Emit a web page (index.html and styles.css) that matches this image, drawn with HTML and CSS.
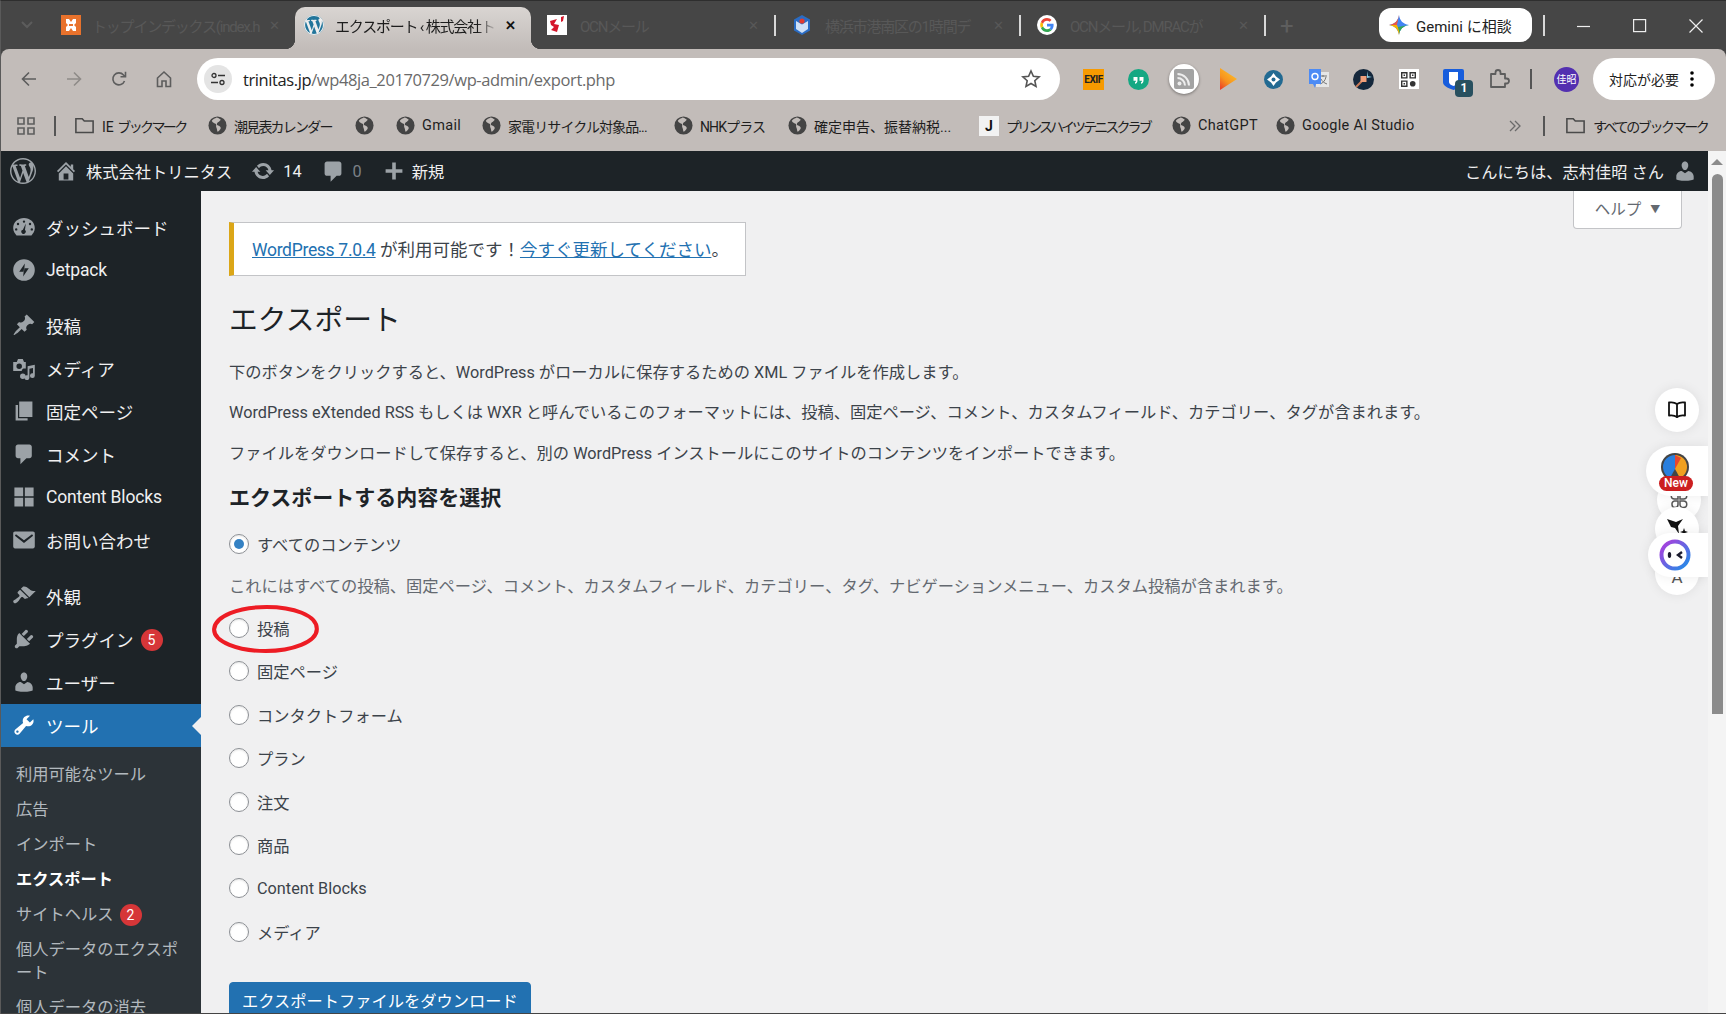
FILE: index.html
```html
<!DOCTYPE html>
<html lang="ja">
<head>
  <meta charset="UTF-8">
  <title>エクスポート ‹ 株式会社トリニタス</title>
  <link rel="stylesheet" href="styles.css">
</head>
<body>
<div class="window">

  <!-- タブ -->
  <div class="tabstrip">
    <svg class="tab-list" width="14" height="14" viewBox="0 0 14 14"><path d="M2 4l5 5 5-5" fill="none" stroke="#5c5c5c" stroke-width="2"/></svg>
    <div class="tab">
      <svg class="fav" viewBox="0 0 20 20"><rect width="20" height="20" fill="#e8722c"/><path d="M5 4h3l2 3 2-3h3v4l-2 2 2 2v4h-3l-2-3-2 3H5v-4l2-2-2-2z" fill="#fff"/><rect x="8" y="9" width="4" height="2" fill="#e8722c"/></svg>
      <span class="tab-title">トップインデックス(index.h</span>
      <span class="tab-x">✕</span>
    </div>
    <div class="tab active">
      <svg class="fav" viewBox="0 0 20 20"><circle cx="10" cy="10" r="10" fill="#21759b"/><path fill="#eee" d="M20 10c0-5.51-4.49-10-10-10C4.48 0 0 4.49 0 10c0 5.52 4.48 10 10 10 5.51 0 10-4.48 10-10zM7.78 15.37L4.37 6.22c.55-.02 1.17-.08 1.17-.08.5-.06.44-1.13-.06-1.11 0 0-1.45.11-2.37.11-.18 0-.37 0-.58-.01C4.12 2.69 6.87 1.11 10 1.11c2.33 0 4.45.87 6.05 2.34-.68-.11-1.65.39-1.65 1.58 0 .74.45 1.36.9 2.1.35.61.55 1.36.55 2.46 0 1.49-1.4 5-1.4 5l-3.03-8.37c.54-.02.82-.17.82-.17.5-.05.44-1.25-.06-1.22 0 0-1.44.12-2.38.12-.87 0-2.33-.12-2.33-.12-.5-.03-.56 1.2-.06 1.22l.92.08 1.26 3.41zM17.41 10c.24-.64.74-1.87.43-4.25.7 1.29 1.05 2.71 1.05 4.25 0 3.29-1.73 6.24-4.4 7.78.97-2.59 1.94-5.2 2.92-7.78zM6.1 18.09C3.12 16.65 1.11 13.53 1.11 10c0-1.3.23-2.48.72-3.59C3.25 10.3 4.67 14.2 6.1 18.09zm4.03-6.63l2.58 6.98c-.86.29-1.76.45-2.71.45-.79 0-1.57-.11-2.29-.33.81-2.38 1.62-4.74 2.42-7.1z"/></svg>
      <span class="tab-title">エクスポート ‹ 株式会社トリ</span>
      <span class="tab-x">✕</span>
    </div>
    <div class="tab">
      <svg class="fav" viewBox="0 0 20 20"><rect width="20" height="20" fill="#fff"/><path d="M3 6l7-2-3 5 5 1-2 7-6-2 3-3-3-2zM14 2l3-1-1 5-2 1z" fill="#d5162b"/></svg>
      <span class="tab-title">OCNメール</span>
      <span class="tab-x">✕</span>
    </div>
    <i class="tab-sep"></i>
    <div class="tab">
      <svg class="fav" viewBox="0 0 20 20"><path d="M10 0l8 4.5v11L10 20l-8-4.5v-11z" fill="#2a6cc4"/><path d="M4 6l6 3.5L16 6v8l-6 4-6-4z" fill="#cfe0f6"/><circle cx="10" cy="6" r="2.6" fill="#e23b2e"/></svg>
      <span class="tab-title">横浜市港南区の1時間デ</span>
      <span class="tab-x">✕</span>
    </div>
    <i class="tab-sep"></i>
    <div class="tab">
      <svg class="fav" viewBox="0 0 20 20"><circle cx="10" cy="10" r="10" fill="#fff"/><path d="M16.6 10.2c0-.5 0-1-.1-1.4H10v2.7h3.7c-.2.9-.6 1.6-1.3 2l2.1 1.7c1.3-1.1 2.1-2.9 2.1-5z" fill="#4285f4"/><path d="M10 17c1.9 0 3.4-.6 4.5-1.8l-2.1-1.7c-.6.4-1.4.7-2.4.7-1.8 0-3.4-1.2-3.9-2.9L3.9 13c1.1 2.4 3.4 4 6.1 4z" fill="#34a853"/><path d="M6.1 11.3c-.3-.8-.3-1.8 0-2.6L3.9 7c-.9 1.8-.9 4.200 0 6z" fill="#fbbc05"/><path d="M10 5.800c1 0 1.900.4 2.600 1l1.900-1.900C13.300 3.700 11.800 3 10 3 7.300 3 5 4.600 3.900 7l2.200 1.700C6.600 7 8.200 5.800 10 5.800z" fill="#ea4335"/></svg>
      <span class="tab-title">OCNメール, DMRACが</span>
      <span class="tab-x">✕</span>
    </div>
    <i class="tab-sep"></i>
    <span class="tab-new">+</span>
    <div class="gemini">
      <svg width="20" height="20" viewBox="0 0 20 20"><defs><clipPath id="gem"><path d="M10 0c.9 5.600 3.700 9 10 10-6.300 1-9.100 4.400-10 10-.9-5.600-3.700-9-10-10 6.300-1 9.100-4.400 10-10z"/></clipPath></defs><g clip-path="url(#gem)"><rect width="20" height="20" fill="#4285f4"/><path d="M0 0h10L8 10H0z" fill="#e8574a"/><path d="M0 10h8l4 10H0z" fill="#f4b400"/><path d="M9 12l11-2v10H11z" fill="#34a853"/></g></svg>
      <span>Gemini に相談</span>
    </div>
    <i class="tab-sep gem-sep"></i>
    <div class="win-btns">
      <svg width="14" height="14" viewBox="0 0 14 14"><path d="M0 7.500h13" stroke="#eee" stroke-width="1.200"/></svg>
      <svg width="14" height="14" viewBox="0 0 14 14"><rect x=".6" y=".6" width="12" height="12" fill="none" stroke="#eee" stroke-width="1.200"/></svg>
      <svg width="14" height="14" viewBox="0 0 14 14"><path d="M.5.500l13 13M13.500.500l-13 13" stroke="#eee" stroke-width="1.200"/></svg>
    </div>
  </div>

  <!-- ツールバー -->
  <div class="chrome">
    <div class="toolbar">
      <div class="nav-btns">
        <svg width="20" height="20" viewBox="0 0 20 20"><path d="M17 10H4M10 3.500L3.500 10l6.500 6.500" fill="none" stroke="#5d5d5d" stroke-width="1.600"/></svg>
        <svg width="20" height="20" viewBox="0 0 20 20"><path d="M3 10h13M10 3.500l6.500 6.500-6.500 6.500" fill="none" stroke="#8f8b88" stroke-width="1.600"/></svg>
        <svg width="20" height="20" viewBox="0 0 20 20"><path d="M15.500 12a6 6 0 1 1-1-6L16 7.500M16.500 2.800v5h-5" fill="none" stroke="#5d5d5d" stroke-width="1.600"/></svg>
        <svg width="20" height="20" viewBox="0 0 20 20"><path d="M3.500 9L10 3l6.500 6v8.500H12V12H8v5.500H3.500z" fill="none" stroke="#5d5d5d" stroke-width="1.600"/></svg>
      </div>
      <div class="urlbar">
        <span class="site-info"><svg width="16" height="16" viewBox="0 0 16 16"><circle cx="4" cy="4.500" r="2" fill="none" stroke="#333" stroke-width="1.300"/><path d="M8 4.500h7M1 11.500h7" stroke="#333" stroke-width="1.300"/><circle cx="12" cy="11.500" r="2" fill="none" stroke="#333" stroke-width="1.300"/></svg></span>
        <span class="url"><b>trinitas.jp</b>/wp48ja_20170729/wp-admin/export.php</span>
        <svg class="star" width="20" height="20" viewBox="0 0 20 20"><path d="M10 2l2.400 5.300 5.700.6-4.300 3.800 1.200 5.700L10 14.500l-5 2.900 1.200-5.700-4.300-3.800 5.700-.6z" fill="none" stroke="#555" stroke-width="1.600"/></svg>
      </div>
      <div class="exts">
        <span class="ext"><span class="ext-exif">EXIF</span></span>
        <span class="ext"><svg width="21" height="21" viewBox="0 0 21 21"><circle cx="10.500" cy="10.500" r="10.500" fill="#15a883"/><path d="M5.500 8h4v3.500c0 2-1 3-2.500 3.300v-1.500c.6-.2 1-.7 1-1.500H5.500zM11.500 8h4v3.500c0 2-1 3-2.500 3.300v-1.500c.6-.2 1-.7 1-1.500h-2.500z" fill="#fff"/></svg></span>
        <span class="ext"><span class="ext-rss"><svg width="20" height="20" viewBox="0 0 20 20"><rect width="20" height="20" rx="2" fill="#a3a3a3"/><circle cx="5.500" cy="14.500" r="2" fill="#eee"/><path d="M3.500 9a7.500 7.500 0 0 1 7.500 7.500M3.500 5a11.500 11.500 0 0 1 11.500 11.500" fill="none" stroke="#eee" stroke-width="2"/></svg></span></span>
        <span class="ext"><svg width="19" height="24" viewBox="0 0 19 24"><defs><linearGradient id="play" x1=".7" y1="0" x2="0" y2="1"><stop offset="0" stop-color="#fcc12b"/><stop offset=".55" stop-color="#f7931e"/><stop offset="1" stop-color="#e8352a"/></linearGradient></defs><path d="M1 1l17 11L1 23z" fill="url(#play)"/></svg></span>
        <span class="ext"><svg width="19" height="19" viewBox="0 0 19 19"><circle cx="9.500" cy="9.500" r="9.500" fill="#226a92"/><path d="M9.500 3l2.500 3.500 4 3-4 3-2.500 3.500-2.500-3.500-4-3 4-3z" fill="#fff"/><circle cx="9.500" cy="9.500" r="2" fill="#226a92"/></svg></span>
        <span class="ext"><svg width="22" height="22" viewBox="0 0 22 22"><rect x="8" y="4" width="13" height="15" fill="#e6e6e6"/><path d="M11 8h8M15 7v2M12 16c3-1 5-3 6-7M13 11c1 2 3 4 6 5" stroke="#777" stroke-width="1" fill="none"/><path d="M1 1h12v15H8l-1 4-2-4H1z" fill="#4c8bf5"/><circle cx="7" cy="8.500" r="3" fill="none" stroke="#fff" stroke-width="1.400"/></svg></span>
        <span class="ext"><svg width="21" height="21" viewBox="0 0 21 21"><circle cx="10.500" cy="10.500" r="10.500" fill="#15283c"/><path d="M3 18L10 11" stroke="#c97b58" stroke-width="2"/><rect x="7.500" y="7" width="6" height="6" fill="#f2a07a"/><path d="M14 2l1 5 4 1-5 1z" fill="#8fd0e6"/></svg></span>
        <span class="ext"><span class="ext-qr"><svg width="15" height="15" viewBox="0 0 16 16"><path d="M0 0h7v7H0zM1.500 1.500v4h4v-4zM9 0h7v7H9zM10.500 1.500v4h4v-4zM0 9h7v7H0zM1.500 10.500v4h4v-4zM2.700 2.700h1.600v1.600H2.700zM11.700 2.700h1.600v1.600h-1.600zM2.700 11.700h1.600v1.600H2.700z" fill="#333" fill-rule="evenodd"/><circle cx="12.500" cy="12.500" r="3" fill="#333"/></svg></span></span>
        <span class="ext ext-bit"><svg width="21" height="21" viewBox="0 0 21 21"><path d="M2 0h17a2 2 0 0 1 2 2v11c0 4-5 6-10.500 8C5 19 0 17 0 13V2a2 2 0 0 1 2-2z" fill="#175ddc"/><path d="M6 3h9v10c0 2-2 3-4.500 4C8 16 6 15 6 13z" fill="#fff"/></svg><span class="ext-badge">1</span></span>
        <span class="ext"><svg width="22" height="22" viewBox="0 0 22 22"><path d="M3 6h4.500V4.500a2.500 2.500 0 0 1 5 0V6H17v4.500h1.500a2.500 2.500 0 0 1 0 5H17V19H3z" fill="none" stroke="#5d5d5d" stroke-width="1.800" stroke-linejoin="round"/></svg></span>
      </div>
      <i class="tool-sep"></i>
      <span class="avatar">佳昭</span>
      <span class="update-pill">対応が必要<svg width="4" height="16" viewBox="0 0 4 16"><circle cx="2" cy="2" r="1.800"/><circle cx="2" cy="8" r="1.800"/><circle cx="2" cy="14" r="1.800"/></svg></span>
    </div>

    <div class="bookmarks">
      <svg width="20" height="20" viewBox="0 0 20 20"><path d="M2 2h6v6H2zM12 2h6v6h-6zM2 12h6v6H2zM12 12h6v6h-6z" fill="none" stroke="#5d5d5d" stroke-width="1.600"/></svg>
      <i class="tool-sep"></i>
      <a class="bm folder-bm"><svg class="folder" viewBox="0 0 20 20"><path d="M1.800 3.500h6l2 2.200h8.400v11H1.800z" fill="none" stroke="#4a4a4a" stroke-width="1.500"/></svg><span><span class="bm-ie">IE </span><span class="bm-kana">ブックマーク</span></span></a>
      <a class="bm tight"><svg class="globe" viewBox="0 0 20 20"><use href="#globe"/></svg>潮見表カレンダー</a>
      <a class="bm"><svg class="globe" viewBox="0 0 20 20"><use href="#globe"/></svg></a>
      <a class="bm loose"><svg class="globe" viewBox="0 0 20 20"><use href="#globe"/></svg>Gmail</a>
      <a class="bm"><svg class="globe" viewBox="0 0 20 20"><use href="#globe"/></svg>家電リサイクル対象品...</a>
      <a class="bm"><svg class="globe" viewBox="0 0 20 20"><use href="#globe"/></svg>NHKプラス</a>
      <a class="bm wide"><svg class="globe" viewBox="0 0 20 20"><use href="#globe"/></svg>確定申告、振替納税...</a>
      <a class="bm tightest"><span class="bm-j">J</span>プリンスハイツテニスクラブ</a>
      <a class="bm loose"><svg class="globe" viewBox="0 0 20 20"><use href="#globe"/></svg>ChatGPT</a>
      <a class="bm loose"><svg class="globe" viewBox="0 0 20 20"><use href="#globe"/></svg>Google AI Studio</a>
      <svg width="14" height="14" viewBox="0 0 14 14"><path d="M2 2l5 5-5 5M7 2l5 5-5 5" fill="none" stroke="#6a6a6a" stroke-width="1.300"/></svg>
      <i class="tool-sep"></i>
      <a class="bm tighter folder-bm"><svg class="folder" viewBox="0 0 20 20"><path d="M1.800 3.500h6l2 2.200h8.400v11H1.800z" fill="none" stroke="#4a4a4a" stroke-width="1.500"/></svg>すべてのブックマーク</a>
    </div>
  </div>

  <svg width="0" height="0" class="defs">
    <symbol id="globe" viewBox="0 0 20 20"><circle cx="10" cy="10" r="9.500" fill="#444"/><path d="M9 1.500c-1.500 1-4 1.500-5 3.500.5 2 3 2.500 4.500 3.500.5 1.500-.5 2.500.5 4 .5 1 .5 2.500 1 4 1.500-.5 3-2.500 3.500-4-.5-1.500-2.500-2.500-4-3-.5-2 .5-3 2-3.500l2-2c-1.500-1.500-3-2.500-4.500-2.500z" fill="#c2bcb9"/></symbol>
  </svg>

  <div class="page">
    <div class="wp">
      <!-- 管理バー -->
      <div class="adminbar">
        <svg class="ab-logo" viewBox="0 0 20 20"><path d="M20 10c0-5.510-4.490-10-10-10C4.480 0 0 4.490 0 10c0 5.520 4.480 10 10 10 5.510 0 10-4.480 10-10zM7.780 15.370L4.370 6.220c.55-.02 1.170-.08 1.170-.08.5-.06.44-1.130-.06-1.110 0 0-1.450.11-2.370.11-.18 0-.37 0-.58-.01C4.120 2.690 6.870 1.110 10 1.110c2.330 0 4.450.87 6.050 2.340-.68-.11-1.650.39-1.650 1.580 0 .74.45 1.360.9 2.100.35.61.55 1.360.55 2.460 0 1.490-1.400 5-1.400 5l-3.030-8.370c.54-.02.82-.17.82-.17.5-.05.44-1.250-.06-1.220 0 0-1.440.12-2.380.12-.87 0-2.330-.12-2.330-.12-.5-.03-.56 1.200-.06 1.220l.92.08 1.260 3.410zM17.410 10c.24-.64.74-1.870.43-4.250.7 1.290 1.050 2.710 1.050 4.250 0 3.290-1.730 6.240-4.400 7.780.97-2.590 1.940-5.200 2.920-7.780zM6.100 18.090C3.120 16.650 1.110 13.530 1.110 10c0-1.300.23-2.480.72-3.590C3.250 10.300 4.670 14.200 6.100 18.090zm4.030-6.630l2.580 6.980c-.86.29-1.760.45-2.710.45-.79 0-1.570-.11-2.290-.33.81-2.380 1.620-4.740 2.420-7.100z"/></svg>
        <svg class="ab-icon" viewBox="0 0 20 20"><path d="M16 8.500l1.530 1.530-1.060 1.060L10 4.620l-6.470 6.470-1.060-1.060L10 2.500l4 4v-2h2v4zm-6-2.460l6 5.990V18H4v-5.970zM12 17v-5H8v5h4z"/></svg>
        <span class="ab-site">株式会社トリニタス</span>
        <svg class="ab-icon ab-update" viewBox="0 0 20 20"><path d="M10.200 3.280c3.530 0 6.430 2.610 6.920 6h2.080l-3.500 4-3.500-4h2.320c-.45-1.970-2.210-3.450-4.320-3.450-1.450 0-2.730.71-3.540 1.780L4.950 5.660C6.230 4.200 8.110 3.280 10.200 3.280zm-.4 13.440c-3.520 0-6.430-2.610-6.920-6H.8l3.500-4c1.170 1.330 2.330 2.670 3.500 4H5.480c.45 1.970 2.210 3.450 4.320 3.450 1.450 0 2.730-.71 3.540-1.780l1.710 1.950c-1.280 1.460-3.150 2.380-5.250 2.380z"/></svg>
        <span class="ab-count">14</span>
        <svg class="ab-icon ab-comment" viewBox="0 0 20 20"><path d="M5 2h10c1.100 0 2 .9 2 2v8c0 1.100-.9 2-2 2h-2l-5 5v-5H5c-1.100 0-2-.9-2-2V4c0-1.100.9-2 2-2z"/></svg>
        <span class="ab-count dim">0</span>
        <svg class="ab-icon ab-plus" viewBox="0 0 20 20"><path d="M17 8.500v3h-5.500V17h-3v-5.500H3v-3h5.500V3h3v5.500z"/></svg>
        <span class="ab-new">新規</span>
        <span class="ab-hello">こんにちは、志村佳昭 さん</span>
        <svg class="ab-icon ab-user" viewBox="0 0 20 20"><path d="M10 9.250c-2.270 0-2.730-3.440-2.730-3.440C7 4.020 7.820 2 9.970 2c2.160 0 2.980 2.020 2.710 3.810 0 0-.41 3.440-2.680 3.440zm0 2.570L12.720 10c2.390 0 4.520 2.330 4.520 4.530v2.490s-3.650 1.130-7.240 1.130c-3.650 0-7.240-1.130-7.240-1.130v-2.490c0-2.250 1.940-4.480 4.470-4.480z"/></svg>
      </div>

      <div class="wp-body">
        <!-- サイドメニュー -->
        <nav class="sidebar">
          <ul class="menu">
            <li><svg viewBox="0 0 20 20"><path fill-rule="evenodd" d="M3.760 17h12.480C17.340 15.700 19 13.600 19 11c0-5-4-8.500-9-8.500S1 6 1 11c0 2.600 1.660 4.700 2.760 6zM10 4.500a1 1 0 1 1 0 2 1 1 0 0 1 0-2zM5 6.500a1 1 0 1 1 0 2 1 1 0 0 1 0-2zm10 0a1 1 0 1 1 0 2 1 1 0 0 1 0-2zM3.500 11a1 1 0 1 1 0 2 1 1 0 0 1 0-2zm13 0a1 1 0 1 1 0 2 1 1 0 0 1 0-2zM11.500 7l-.7 5.600a1.800 1.800 0 1 1-1.700-.4z"/></svg>ダッシュボード</li>
            <li><svg viewBox="0 0 20 20"><path fill-rule="evenodd" d="M10 1a9 9 0 1 1 0 18 9 9 0 0 1 0-18zm.7 3.500L6 11.500h4zM9.300 15.500l4.700-7h-4z"/></svg><span class="latin">Jetpack</span></li>
            <li class="gap"><svg viewBox="0 0 20 20"><path d="M10.440 3.020l1.820-1.820 6.360 6.350-1.830 1.820c-1.050-.68-2.480-.57-3.410.36l-.75.75c-.92.93-1.040 2.350-.35 3.410l-1.830 1.820-2.410-2.410-2.800 2.790c-.42.42-3.380 2.710-3.800 2.290s1.860-3.390 2.280-3.810l2.790-2.790L4.100 9.360l1.830-1.820c1.050.69 2.480.57 3.400-.36l.75-.75c.93-.92 1.050-2.350.36-3.410z"/></svg>投稿</li>
            <li><svg viewBox="0 0 20 20"><path fill-rule="evenodd" d="M1 5h3l1-2.500h4L10 5h1.500v5.500H9.500A3 3 0 0 0 8 12.500H1zm5 1.200a2.300 2.300 0 1 0 0 4.600 2.300 2.300 0 0 0 0-4.600z"/><path d="M13 8.500l6-1.200v9a2 2 0 1 1-1.500-1.900V10l-3 .6v7.400a2 2 0 1 1-1.500-1.900zM9 14.500a2.300 2.300 0 1 1 0 4.600 2.300 2.300 0 0 1 0-4.600z"/></svg>メディア</li>
            <li><svg viewBox="0 0 20 20"><path d="M6 15V2h11v13H6zm-1 1h8v2H3V5h2v11z"/></svg>固定ページ</li>
            <li><svg viewBox="0 0 20 20"><path d="M5 2h9.500c1.100 0 2 .9 2 2v7.500c0 1.100-.9 2-2 2h-2.500l-5 5v-5H5c-1.100 0-2-.9-2-2V4c0-1.100.9-2 2-2z"/></svg>コメント</li>
            <li><svg viewBox="0 0 20 20"><path d="M2 2h7.300v7.300H2zM10.700 2H18v7.300h-7.300zM2 10.700h7.300V18H2zM10.700 10.700H18V18h-7.300z"/></svg><span class="latin">Content Blocks</span></li>
            <li><svg viewBox="0 0 20 20"><path fill-rule="evenodd" d="M19 15.500v-11c0-.83-.67-1.500-1.500-1.500h-15C1.670 3 1 3.670 1 4.500v11c0 .83.670 1.500 1.500 1.500h15c.83 0 1.500-.67 1.500-1.500zM3.300 5.300L10 10.300l6.700-5 .9 1.100L10 12.600 2.400 6.400z"/></svg>お問い合わせ</li>
            <li class="gap2"><svg viewBox="0 0 20 20"><path d="M14.480 11.060L7.410 3.990l1.500-1.500c.5-.56 2.300-.47 3.510.32 1.210.8 1.430 1.280 2.910 2.100 1.180.64 2.450 1.260 4.450.85zm-.71.71L6.700 4.700 4.930 6.470c-.39.39-.39 1.020 0 1.410l1.060 1.060c.39.39.39 1.030 0 1.420-.6.6-1.430 1.110-2.210 1.690-.35.26-.7.53-1.010.84C1.430 13.230.76 14.240 1.100 15.100c.08.2.2.38.35.53.15.15.33.27.53.35.86.34 1.870-.33 3.210-1.670.31-.31.58-.66.84-1.010.58-.78 1.090-1.610 1.690-2.210.39-.39 1.030-.39 1.420 0l1.060 1.060c.39.39 1.020.39 1.410 0z"/></svg>外観</li>
            <li><svg viewBox="0 0 20 20"><path d="M13.110 4.360L9.870 7.600 8 5.730l3.240-3.240c.35-.34 1.050-.2 1.560.32.52.51.66 1.210.31 1.550zm-8 1.770l.91-1.120 9.010 9.010-1.190.84c-.71.71-2.630 1.160-3.820 1.160H6.140L4.900 17.260c-.59.59-1.540.59-2.120 0-.59-.58-.59-1.530 0-2.120l1.240-1.240v-3.880c0-1.130.4-3.190 1.090-3.890zm7.260 3.970l3.240-3.240c.34-.35 1.040-.21 1.550.31.52.51.66 1.210.31 1.550l-3.240 3.250z"/></svg>プラグイン<span class="count">5</span></li>
            <li><svg viewBox="0 0 20 20"><path d="M10 9.250c-2.270 0-2.730-3.440-2.730-3.440C7 4.020 7.820 2 9.970 2c2.160 0 2.980 2.020 2.710 3.810 0 0-.41 3.440-2.680 3.440zm0 2.570L12.720 10c2.390 0 4.520 2.330 4.520 4.530v2.490s-3.650 1.130-7.240 1.130c-3.650 0-7.240-1.130-7.240-1.130v-2.490c0-2.250 1.940-4.480 4.470-4.480z"/></svg>ユーザー</li>
            <li class="current"><svg viewBox="0 0 20 20"><path fill-rule="evenodd" d="M16.680 9.770c-1.340 1.340-3.300 1.670-4.950.99l-5.410 6.520c-.99.99-2.590.99-3.580 0s-.99-2.590 0-3.570l6.520-5.420c-.68-1.650-.35-3.610.99-4.950 1.280-1.280 3.120-1.620 4.720-1.060l-2.890 2.890 2.820 2.820 2.860-2.870c.53 1.580.18 3.390-1.080 4.650zM3.810 16.210c.4.39 1.040.39 1.430 0 .4-.4.4-1.040 0-1.430-.39-.4-1.030-.4-1.430 0-.39.39-.39 1.030 0 1.430z"/></svg>ツール</li>
          </ul>
          <ul class="submenu">
            <li>利用可能なツール</li>
            <li>広告</li>
            <li>インポート</li>
            <li class="on">エクスポート</li>
            <li>サイトヘルス<span class="count">2</span></li>
            <li>個人データのエクスポ<br>ート</li>
            <li>個人データの消去</li>
          </ul>
        </nav>

        <!-- 本文 -->
        <main class="main">
          <div class="help-tab">ヘルプ<span class="help-arrow">▼</span></div>

          <div class="notice"><a href="#">WordPress 7.0.4</a> が利用可能です！<a href="#">今すぐ更新してください</a>。</div>

          <h1>エクスポート</h1>
          <p>下のボタンをクリックすると、WordPress がローカルに保存するための XML ファイルを作成します。</p>
          <p>WordPress eXtended RSS もしくは WXR と呼んでいるこのフォーマットには、投稿、固定ページ、コメント、カスタムフィールド、カテゴリー、タグが含まれます。</p>
          <p>ファイルをダウンロードして保存すると、別の WordPress インストールにこのサイトのコンテンツをインポートできます。</p>

          <h2>エクスポートする内容を選択</h2>

          <label class="choice"><input type="radio" name="content" checked>すべてのコンテンツ</label>
          <p class="desc">これにはすべての投稿、固定ページ、コメント、カスタムフィールド、カテゴリー、タグ、ナビゲーションメニュー、カスタム投稿が含まれます。</p>
          <label class="choice"><input type="radio" name="content">投稿</label>
          <label class="choice"><input type="radio" name="content">固定ページ</label>
          <label class="choice"><input type="radio" name="content">コンタクトフォーム</label>
          <label class="choice"><input type="radio" name="content">プラン</label>
          <label class="choice"><input type="radio" name="content">注文</label>
          <label class="choice"><input type="radio" name="content">商品</label>
          <label class="choice"><input type="radio" name="content">Content Blocks</label>
          <label class="choice"><input type="radio" name="content">メディア</label>

          <button class="export-btn">エクスポートファイルをダウンロード</button>

          <!-- 拡張機能のフローティングボタン -->
          <div class="float f-book"><svg width="22" height="22" viewBox="0 0 22 22"><path d="M11 5c-2-1.500-5-2-8-1.500v13c3-.5 6 0 8 1.500 2-1.500 5-2 8-1.500v-13C16 3 13 3.500 11 5zM11 5v14" fill="none" stroke="#111" stroke-width="1.800" stroke-linejoin="round"/></svg></div>
          <div class="float f-app"><svg width="20" height="20" viewBox="0 0 20 20"><path d="M6 2.500a3 3 0 0 1 3 3V9H5.500a3 3 0 0 1 0-6.500zM14 2.500a3 3 0 0 0-3 3V9h3.500a3 3 0 0 0 0-6.500zM5.500 11H9v3.500a3 3 0 0 1-6 0 3 3 0 0 1 2.500-3.500zM11 11h3.500a3 3 0 0 1 0 6.500 3 3 0 0 1-3.500-3z" fill="none" stroke="#555" stroke-width="1.500"/></svg></div>
          <div class="float f-spark"><svg width="24" height="24" viewBox="0 0 24 24"><path d="M2 4l9 3 7-3-5 7 1 8-4-6-4-1z" fill="#111"/><path d="M19 13l1 3 3 1-3 1-1 3-1-3-3-1 3-1z" fill="#111"/></svg></div>
          <div class="float f-trans"><span>A</span></div>
          <div class="float f-new">
            <svg width="30" height="30" viewBox="0 0 30 30"><circle cx="15" cy="15" r="14" fill="#444"/><path d="M15 3a12 12 0 0 0-12 12c0 5 3 9 7 11l5-9z" fill="#2a7fde"/><path d="M15 3a12 12 0 0 1 12 12c0 5-3 9-7 11l-5-9z" fill="#f0a020"/><path d="M15 3l6 3-6 11z" fill="#e8462e"/></svg>
            <span class="new-tag">New</span>
          </div>
          <div class="float f-face"><svg width="32" height="32" viewBox="0 0 32 32"><defs><linearGradient id="face" x1="0" y1="0" x2="1" y2="1"><stop offset="0" stop-color="#b13bdc"/><stop offset="1" stop-color="#1c8fe8"/></linearGradient></defs><circle cx="16" cy="16" r="13.500" fill="#fff" stroke="url(#face)" stroke-width="4"/><ellipse cx="10.500" cy="16" rx="1.700" ry="3" fill="#1b1b2e"/><path d="M23 13l-4 3 4 3" fill="none" stroke="#1b1b2e" stroke-width="2.400"/></svg></div>
        </main>
      </div>
    </div>

    <div class="scrollbar">
      <span class="sb-arrow"></span>
      <span class="sb-thumb"></span>
    </div>
  </div>

  <!-- 赤丸の書き込み -->
  <svg class="mark" width="115" height="54" viewBox="0 0 112 54" preserveAspectRatio="none"><path d="M6 27C7 14 30 5 57 5c26 0 49 8 49 22 0 13-24 22-50 22C30 49 5 40 6 27z" fill="none" stroke="#ed1c24" stroke-width="4"/></svg>
</div>
</body>
</html>
```
FILE: styles.css
```css
* {
  box-sizing: border-box;
}
html, body {
  margin: 0;
  padding: 0;
  height: 100%;
  overflow: hidden;
}
body {
  font-family: Roboto, "Noto Sans CJK JP", sans-serif;
  background: #333;
}
ul {
  list-style: none;
  margin: 0;
  padding: 0;
}
.defs {
  position: absolute;
}
.window {
  position: relative;
  width: 1726px;
  height: 1014px;
  display: flex;
  flex-direction: column;
  border-left: 1px solid #5a5a5a;
  border-top: 1px solid #2e2e2e;
  background: #444;
  overflow: hidden;
}

/* タブ */
.tabstrip {
  height: 48px;
  flex: none;
  display: flex;
  align-items: flex-end;
  background: #464646;
  position: relative;
}
.tab-list {
  width: 14px;
  height: 14px;
  margin: 0 18px 17px 19px;
}
.tab {
  width: 243px;
  height: 42px;
  display: flex;
  align-items: center;
  padding: 0 16px 6px 9px;
  color: #585858;
  font-size: 15px;
  letter-spacing: -1.2px;
  position: relative;
}
.tab .fav {
  width: 20px;
  height: 20px;
  flex: none;
  margin-right: 11px;
}
.active ~ .tab {
  padding-left: 16px;
}
.active ~ .tab .fav {
  margin-right: 13px;
}
.tab-title {
  flex: 1;
  white-space: nowrap;
  overflow: hidden;
}
.tab-x {
  font-size: 13px;
  color: #585858;
  margin-left: 8px;
}
.tab.active {
  width: 236px;
  background: linear-gradient(#d9d5d2, #c2bcb9);
  border-radius: 10px 10px 0 0;
  color: #1d1d1d;
  padding-left: 9px;
}
.tab.active .tab-title {
  -webkit-mask-image: linear-gradient(90deg, #000 88%, transparent);
  mask-image: linear-gradient(90deg, #000 88%, transparent);
}
.tab.active .tab-x {
  color: #111;
  font-weight: 700;
}
.tab.active::before,
.tab.active::after {
  content: "";
  position: absolute;
  bottom: 0;
  width: 10px;
  height: 10px;
}
.tab.active::before {
  left: -10px;
  background: radial-gradient(circle at 0 0, transparent 10px, #c2bcb9 10.5px);
}
.tab.active::after {
  right: -10px;
  background: radial-gradient(circle at 100% 0, transparent 10px, #c2bcb9 10.5px);
}
.tab-sep {
  width: 2px;
  height: 21px;
  flex: none;
  background: #d8d8d8;
  margin-bottom: 13px;
}
.tab-new {
  color: #5e5e5e;
  font-size: 24px;
  line-height: 1;
  margin: 0 0 11px 14px;
}
.gemini {
  position: absolute;
  left: 1378px;
  top: 7px;
  width: 153px;
  height: 34px;
  background: #fff;
  border-radius: 12px;
  display: flex;
  align-items: center;
  gap: 7px;
  padding-left: 10px;
  font-size: 15px;
  color: #222;
}
.gem-sep {
  position: absolute;
  left: 1542px;
  top: 14px;
  margin: 0;
}
.win-btns {
  position: absolute;
  left: 1576px;
  top: 18px;
  display: flex;
  gap: 42px;
}

/* ツールバー */
.chrome {
  height: 102px;
  flex: none;
  background: #c2bcb9;
  border-radius: 8px 8px 0 0;
}
.toolbar {
  height: 56px;
  display: flex;
  align-items: center;
  padding-top: 4px;
}
.nav-btns {
  display: flex;
  gap: 25px;
  margin-left: 18px;
  width: 178px;
}
.urlbar {
  width: 863px;
  height: 42px;
  background: #fff;
  border-radius: 21px;
  display: flex;
  align-items: center;
  padding: 0 19px 0 7px;
}
.site-info {
  width: 28px;
  height: 28px;
  border-radius: 50%;
  background: #e4e4e4;
  display: flex;
  align-items: center;
  justify-content: center;
  margin-right: 11px;
}
.url {
  flex: 1;
  font-size: 16.5px;
  color: #6a6a6a;
  font-family: "Open Sans", sans-serif;
  letter-spacing: -.4px;
}
.url b {
  color: #222;
  font-weight: 400;
}
.exts {
  display: flex;
  margin-left: 11px;
}
.ext {
  width: 45px;
  height: 32px;
  display: flex;
  align-items: center;
  justify-content: center;
  position: relative;
}
.ext-exif {
  width: 21px;
  height: 21px;
  background: #f79a00;
  color: #222;
  font-size: 10px;
  font-weight: 700;
  text-align: center;
  line-height: 21px;
  letter-spacing: -.5px;
}
.ext-rss {
  width: 30px;
  height: 30px;
  border-radius: 50%;
  background: #fff;
  display: flex;
  align-items: center;
  justify-content: center;
  box-shadow: 0 1px 3px rgba(0, 0, 0, .4);
}
.ext-qr {
  width: 20px;
  height: 20px;
  background: #fff;
  display: flex;
  align-items: center;
  justify-content: center;
}
.ext-badge {
  position: absolute;
  left: 24px;
  top: 17px;
  width: 18px;
  height: 17px;
  background: #28505f;
  color: #fff;
  border-radius: 4px;
  font-size: 12px;
  font-weight: 700;
  text-align: center;
  line-height: 17px;
}
.tool-sep {
  width: 2px;
  height: 20px;
  background: #555;
  flex: none;
}
.toolbar .tool-sep {
  margin: 0 22px 0 9px;
}
.avatar {
  width: 25px;
  height: 25px;
  border-radius: 50%;
  background: #5330b0;
  color: #fff;
  font-size: 10px;
  text-align: center;
  line-height: 25px;
}
.update-pill {
  width: 122px;
  height: 42px;
  margin-left: 14px;
  background: #fff;
  border-radius: 21px;
  display: flex;
  align-items: center;
  gap: 11px;
  padding-left: 16px;
  font-size: 14px;
  color: #222;
  white-space: nowrap;
}

/* ブックマーク */
.bookmarks {
  height: 46px;
  display: grid;
  grid-template-columns: 38px 22px 132px 147px 41px 86px 192px 114px 191px 193px 104px 232px 35px 24px 1fr;
  align-items: center;
  padding: 0 0 5px 15px;
}
.bm {
  display: flex;
  align-items: center;
  gap: 7px;
  font-size: 14px;
  letter-spacing: -.9px;
  color: #1e1e1e;
  white-space: nowrap;
}
.bm.tight {
  letter-spacing: -1.8px;
}
.bm.tighter {
  letter-spacing: -2.4px;
}
.bm.tightest {
  letter-spacing: -2.9px;
}
.bm.wide {
  letter-spacing: 0;
}
.bm.loose {
  font-size: 14.5px;
  letter-spacing: .3px;
}
.bm-ie {
  letter-spacing: 0;
}
.bm-kana {
  letter-spacing: -2.6px;
}
.bm .folder {
  width: 21px;
  height: 21px;
  flex: none;
}
.folder-bm {
  margin-left: -2px;
}
.bm .globe {
  width: 19px;
  height: 19px;
  flex: none;
}
.bm-j {
  width: 20px;
  height: 20px;
  background: #f2f2f2;
  color: #111;
  font-weight: 700;
  text-align: center;
  line-height: 20px;
  letter-spacing: 0;
}

/* ページ全体 */
.page {
  flex: 1;
  min-height: 0;
  display: flex;
  background: #f1f1f1;
  margin-bottom: 1px;
}
.wp {
  flex: 1;
  min-width: 0;
  display: flex;
  flex-direction: column;
}
.adminbar {
  height: 40px;
  flex: none;
  background: #1d2327;
  display: flex;
  align-items: center;
  color: #f0f0f1;
  font-size: 16.25px;
  padding-left: 9px;
}
.ab-logo {
  width: 26px;
  height: 26px;
  fill: #9ca2a7;
  margin-right: 18px;
}
.ab-icon {
  width: 24px;
  height: 24px;
  fill: #9ca2a7;
  flex: none;
}
.ab-site {
  margin: 0 19px 0 8px;
}
.ab-count {
  margin: 0 19px 0 8px;
}
.ab-count.dim {
  color: #7b8086;
  margin-right: 20px;
}
.ab-new {
  margin-left: 6px;
}
.ab-hello {
  margin-left: auto;
  margin-right: 9px;
}
.ab-user {
  margin-right: 11px;
}
.wp-body {
  flex: 1;
  min-height: 0;
  display: flex;
}

/* サイドメニュー */
.sidebar {
  width: 200px;
  flex: none;
  background: #1d2327;
  padding-top: 15px;
  overflow: hidden;
}
.menu li {
  height: 43px;
  display: flex;
  align-items: center;
  padding: 0 0 1px 11px;
  font-size: 17.5px;
  color: #f0f0f1;
  position: relative;
}
.menu li svg {
  width: 24px;
  height: 24px;
  fill: #9ca2a7;
  margin-right: 10px;
  flex: none;
}
.menu li.gap {
  margin-top: 12px;
}
.menu li.gap2 {
  margin-top: 13px;
}
.menu li.current {
  background: #2271b1;
  color: #fff;
}
.menu li.current svg {
  fill: #fff;
}
.menu li.current::after {
  content: "";
  position: absolute;
  right: 0;
  top: 13px;
  border: 9px solid transparent;
  border-right-color: #f0f0f1;
  border-left: 0;
}
.latin {
  letter-spacing: -.15px;
}
.count {
  width: 22px;
  height: 22px;
  border-radius: 50%;
  background: #d63638;
  color: #fff;
  font-size: 14px;
  text-align: center;
  line-height: 22px;
  margin-left: 7px;
  margin-top: 1px;
  font-weight: 400;
}
.submenu {
  background: #2c3338;
  padding: 10px 0 20px 15px;
}
.submenu li {
  font-size: 16.25px;
  line-height: 23px;
  padding: 6px 0;
  color: rgba(240, 246, 252, .7);
  display: flex;
  align-items: center;
}
.submenu .count {
  margin-left: 6px;
}
.submenu li:nth-child(6) {
  display: block;
}
.submenu li.on {
  color: #fff;
  font-weight: 700;
}

/* 本文 */
.main {
  flex: 1;
  min-width: 0;
  position: relative;
  background: #f0f0f1;
  padding: 31px 0 0 28px;
  font-size: 16.25px;
  color: #3c434a;
  overflow: hidden;
}
.help-tab {
  position: absolute;
  top: 0;
  left: 1372px;
  width: 109px;
  height: 38px;
  background: #fff;
  border: 1px solid #c3c4c7;
  border-top: 0;
  border-radius: 0 0 4px 4px;
  color: #646970;
  display: flex;
  align-items: center;
  justify-content: center;
  gap: 9px;
  font-size: 15.5px;
  padding-bottom: 3px;
}
.help-arrow {
  font-size: 10px;
}
.notice {
  width: 517px;
  height: 54px;
  background: #fff;
  border: 1px solid #c3c4c7;
  border-left: 5px solid #dba617;
  padding-left: 18px;
  line-height: 54px;
  font-size: 17.5px;
  white-space: nowrap;
}
.notice a {
  color: #2271b1;
}
.notice a:first-child {
  letter-spacing: -.3px;
}
h1 {
  font-size: 28.75px;
  font-weight: 400;
  line-height: 36px;
  margin: 26px 0 0;
  color: #1d2327;
}
.main p {
  margin: 16.5px 0 0;
  line-height: 24px;
}
.main h1 + p {
  margin-top: 22.5px;
}
h2 {
  font-size: 21px;
  font-weight: 700;
  line-height: 28px;
  margin: 18px 0 0;
  color: #1d2327;
}
.choice {
  height: 43.4px;
  display: flex;
  align-items: center;
  white-space: nowrap;
}
h2 + .choice {
  margin-top: 10.5px;
}
.choice input {
  appearance: none;
  -webkit-appearance: none;
  width: 20px;
  height: 20px;
  margin: 0 8px 0 0;
  background: #fff;
  border: 1px solid #8c8f94;
  border-radius: 50%;
  display: flex;
  align-items: center;
  justify-content: center;
  box-shadow: inset 0 1px 2px rgba(0, 0, 0, .1);
}
.choice input:checked::before {
  content: "";
  width: 10px;
  height: 10px;
  border-radius: 50%;
  background: #3582c4;
}
.main p.desc {
  margin: 0;
  height: 41px;
  color: #646970;
  line-height: 43px;
}
.export-btn {
  display: block;
  margin-top: 28px;
  width: 302px;
  height: 37px;
  background: #2271b1;
  border: 1px solid #2271b1;
  border-radius: 4px;
  color: #fff;
  font: inherit;
  text-align: left;
  padding: 0 0 0 12px;
}

/* フローティング */
.float {
  position: absolute;
  background: #fff;
  display: flex;
  align-items: center;
  justify-content: center;
  box-shadow: 0 0 12px rgba(0, 0, 0, .08);
}
.f-book {
  left: 1454px;
  top: 197px;
  width: 44px;
  height: 44px;
  border-radius: 50%;
}
.f-app {
  left: 1456px;
  top: 287px;
  width: 44px;
  height: 44px;
  border-radius: 50%;
}
.f-spark {
  left: 1454px;
  top: 316px;
  width: 44px;
  height: 44px;
  border-radius: 50%;
  padding-bottom: 4px;
}
.f-trans {
  left: 1454px;
  top: 360px;
  width: 44px;
  height: 44px;
  border-radius: 50%;
  align-items: flex-end;
  padding-bottom: 8px;
  color: #555;
  font-size: 17px;
}
.f-new {
  left: 1445px;
  top: 255px;
  width: 62px;
  height: 50px;
  border-radius: 25px 0 0 25px;
  padding-right: 5px;
}
.new-tag {
  position: absolute;
  left: 13px;
  top: 30px;
  width: 34px;
  height: 15px;
  background: #cc1f20;
  color: #fff;
  border-radius: 8px;
  font-size: 12px;
  font-weight: 500;
  text-align: center;
  line-height: 15px;
}
.f-new svg {
  margin-bottom: 8px;
}
.f-face {
  left: 1447px;
  top: 342px;
  width: 60px;
  height: 44px;
  border-radius: 22px 0 0 22px;
  padding-right: 6px;
}

/* スクロールバー */
.scrollbar {
  width: 18px;
  flex: none;
  background: #f4f4f4;
  padding: 0 3px 0 3px;
  display: flex;
  flex-direction: column;
  align-items: center;
}
.sb-arrow {
  margin-top: 8px;
  border: 6px solid transparent;
  border-top: 0;
  border-bottom: 6px solid #8b8b8b;
}
.sb-thumb {
  margin-top: 9px;
  width: 11px;
  height: 540px;
  border-radius: 6px 6px 0 0;
  background: #8b8b8b;
}

/* 赤丸 */
.mark {
  position: absolute;
  left: 207px;
  top: 601px;
}
```
